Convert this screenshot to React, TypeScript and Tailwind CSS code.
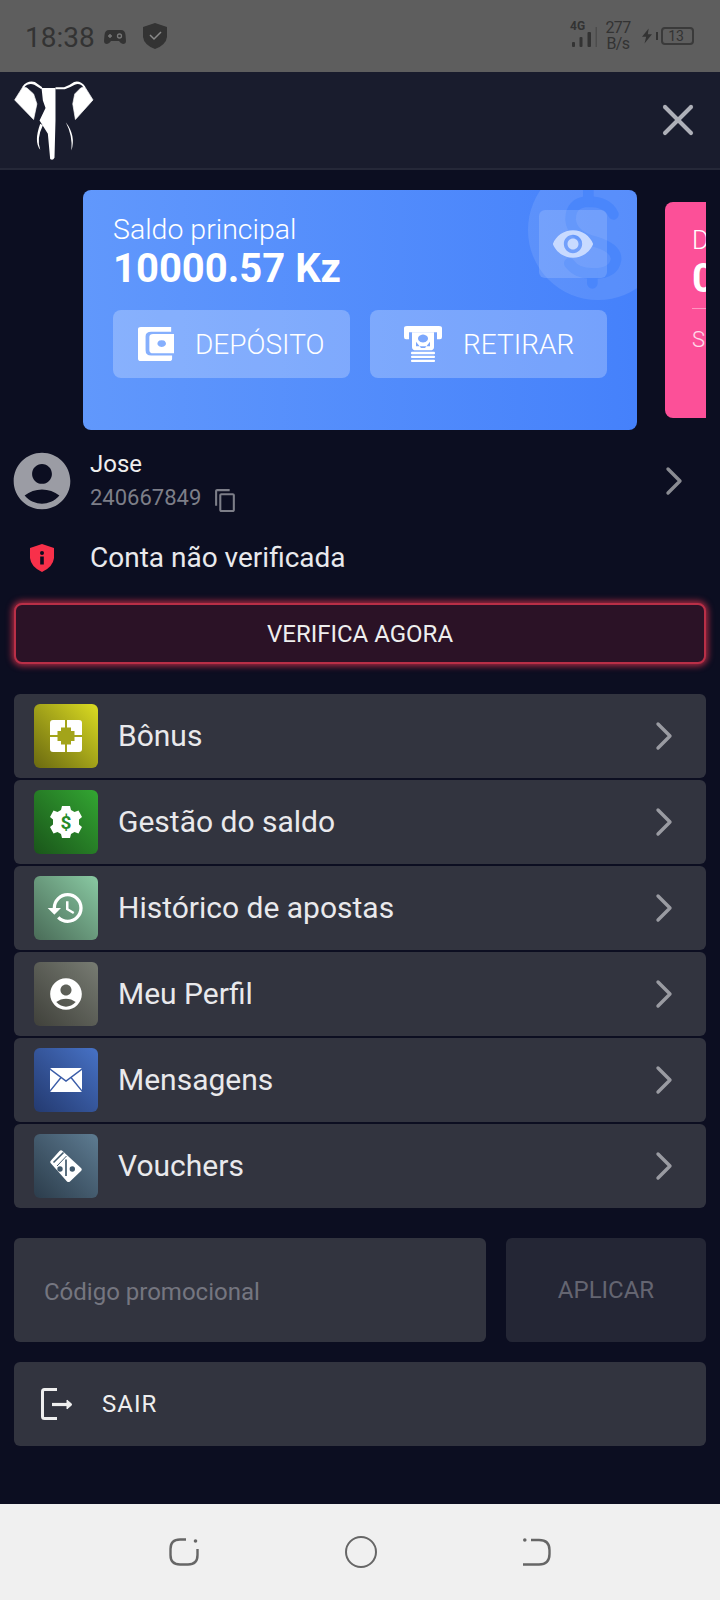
import React from "react";
import { ChevronRight, X } from "lucide-react";
import {
	MdAccountCircle,
	MdHistory,
	MdOutlineContentCopy,
	MdVisibility,
} from "react-icons/md";

const Elephant = () => (
	<svg viewBox="30 25 260 250" className="w-[87px] h-[83px]" fill="#ffffff">
		<path d="M43 88 L68 48 L80 52 L100 70 L110 100 L100 147 Z" stroke="#ffffff" strokeWidth="2" strokeLinejoin="round" />
		<path d="M279 88 L254 48 L242 52 L224 70 L218 100 L226 147 Z" stroke="#ffffff" strokeWidth="2" strokeLinejoin="round" />
		<path d="M66 48 Q82 28 104 34 L126 50 L124 56 L102 42 Q84 36 72 50 Z" />
		<path d="M256 48 Q240 28 222 34 Q205 46 192 50 L166 50 L166 56 L194 56 Q210 50 224 42 Q240 36 250 50 Z" />
		<path d="M124 52 L166 52 L166 150 L163 262 Q158 272 150 266 L143 190 L118 150 L136 112 L128 90 Z" />
		<path d="M120 160 L128 164 Q108 205 120 238 Q100 215 120 160 Z" />
		<path d="M197 155 Q228 195 214 240 Q218 195 197 155 Z" />
	</svg>
);

const Gamepad = () => (
	<svg viewBox="0 0 22 16" className="w-[22px] h-[16px]">
		<path d="M5 1 H17 Q21 1 21.5 6 L22 12 Q22 15 19 15 Q17 15 15 12 H7 Q5 15 3 15 Q0 15 0 12 L0.5 6 Q1 1 5 1 Z" fill="#333333" />
		<path d="M4 7 H8 M6 5 V9" stroke="#777777" strokeWidth="1.4" />
		<circle cx="15.5" cy="7" r="2" fill="none" stroke="#777777" strokeWidth="1.3" />
	</svg>
);

const StatusShield = () => (
	<svg viewBox="0 0 24 26" className="w-[24px] h-[26px]">
		<path d="M12 0 L24 4 V14 Q23 22 12 26 Q1 22 0 14 V4 Z" fill="#333333" />
		<path d="M7 12 L11 16 L18 9" fill="none" stroke="#8a8a8a" strokeWidth="1.5" />
	</svg>
);

const Signal = () => (
	<svg viewBox="0 0 27 20" className="w-[27px] h-[20px]">
		<rect x="2" y="15" width="3" height="5" rx="1" fill="#333333" />
		<rect x="9.5" y="10" width="3" height="10" rx="1" fill="#333333" />
		<rect x="17.5" y="5" width="3.5" height="15" rx="1" fill="#333333" />
		<rect x="25.5" y="0" width="1.5" height="20" fill="#4c4c4c" />
	</svg>
);

const Wallet = () => (
	<svg viewBox="0 0 38 44" preserveAspectRatio="none" className="w-[36px] h-[34px]" fill="#ffffff">
		<path d="M3 0 H35 V6 H14 Q8 6 8 12 V30 Q8 37 14 37 H36 V41 Q36 44 33 44 H3 Q0 44 0 41 V3 Q0 0 3 0 Z" />
		<path fillRule="evenodd" d="M16 9 H38 V34 H16 Q12 34 12 30 V13 Q12 9 16 9 Z M25 17 a4.5 4.5 0 1 0 0.01 0 Z" />
	</svg>
);

const Withdraw = () => (
	<svg viewBox="0 0 38 46" className="w-[38px] h-[36px]" preserveAspectRatio="none" fill="#ffffff">
		<path d="M3 0 H35 Q38 0 38 3 V14 Q38 17 36 17 H33 V8 H5 V17 H2 Q0 17 0 14 V3 Q0 0 3 0 Z" />
		<path fillRule="evenodd" d="M8 8 H30 V27 Q30 31 26 31 H12 Q8 31 8 27 Z M19 11 a5 5 0 1 0 0.01 0 Z M12 20 L17 28 H21 L26 20 L26 26 H12 Z" />
		<rect x="7" y="33" width="24" height="3" rx="1" />
		<rect x="7" y="38" width="24" height="3" rx="1" />
		<rect x="7" y="43" width="24" height="3" rx="1" />
	</svg>
);

const Dollar = () => (
	<svg viewBox="0 0 360 360" className="absolute left-[437px] top-[-5px] w-[120px] h-[120px]" fill="none" stroke="#4a86fb" strokeWidth="32" strokeLinecap="round">
		<path d="M280 88 Q262 50 205 50 Q150 52 152 105 Q155 150 225 170 Q292 190 288 225 Q280 268 215 265 Q170 265 148 235" />
		<path d="M205 15 V50 M217 265 V295" />
	</svg>
);

const BonusIcon = () => (
	<svg viewBox="0 0 32 32" className="w-[32px] h-[32px]">
		<rect width="32" height="32" rx="3" fill="#ffffff" />
		<path fill="#a3a41a" d="M15 0 H17 V8 H15 Z M15 24 H17 V32 H15 Z M0 15 H8 V17 H0 Z M24 15 H32 V17 H24 Z" />
		<path fill="#a3a41a" d="M11 7.5 H21 V11 H24.5 V21 H21 V24.5 H11 V21 H7.5 V11 H11 Z" />
	</svg>
);

const GearIcon = () => (
	<svg viewBox="0 0 32 32" className="w-[32px] h-[32px]">
		<path
			fill="#ffffff"
			d="M12 0 H20 L21 4 L24.5 6 L28.5 4.5 L32 11 L29 13.5 V18.5 L32 21 L28.5 27.5 L24.5 26 L21 28 L20 32 H12 L11 28 L7.5 26 L3.5 27.5 L0 21 L3 18.5 V13.5 L0 11 L3.5 4.5 L7.5 6 L11 4 Z"
		/>
		<text x="16" y="23" textAnchor="middle" fontSize="19" fontWeight="700" fill="#268a28" fontFamily="Roboto, sans-serif">$</text>
	</svg>
);

const MailIcon = () => (
	<svg viewBox="0 0 32 24" className="w-[32px] h-[24px]">
		<rect width="32" height="24" rx="1.5" fill="#ffffff" />
		<path d="M0 1 L16 13 L32 1 M0 23 L11 9.5 M32 23 L21 9.5" fill="none" stroke="#3a5ca8" strokeWidth="1.4" />
	</svg>
);

const VoucherIcon = () => (
	<svg viewBox="0 0 32 32" className="w-[32px] h-[32px]">
		<path fill="#ffffff" d="M9.5 1 Q11 -0.5 12.5 1 L31 18 Q32.5 19.5 31 21 L20 31.5 Q18.5 32.8 17 31.5 L1 13.5 Q-0.5 12 1 10.5 Z" />
		<path d="M3.5 12.5 L13.5 2.5" stroke="#41596c" strokeWidth="1.6" />
		<path d="M7 16 L16.5 6" stroke="#41596c" strokeWidth="1" />
		<circle cx="10" cy="19" r="2.7" fill="#41596c" />
		<circle cx="22.3" cy="19" r="2.7" fill="#41596c" />
		<path d="M16 9.5 V26" stroke="#41596c" strokeWidth="1.7" />
	</svg>
);

const LogoutIcon = () => (
	<svg viewBox="0 0 32 32" className="w-[32px] h-[32px]" fill="none" stroke="#eeeeee" strokeWidth="3">
		<path d="M16 1.5 H3.5 Q1.5 1.5 1.5 3.5 V28.5 Q1.5 30.5 3.5 30.5 H16" />
		<path d="M11 16.5 H30" strokeWidth="3.2" />
		<path d="M26 12 L31 16.5 L26 21 Z" fill="#eeeeee" strokeWidth="1" />
	</svg>
);

const menu = [
	{ label: "Bônus", icon: <BonusIcon />, bg: "from-[#6b6a10] to-[#dcdd22]" },
	{ label: "Gestão do saldo", icon: <GearIcon />, bg: "from-[#1a561a] to-[#33a632]" },
	{ label: "Histórico de apostas", icon: <MdHistory className="text-white text-[40px]" />, bg: "from-[#4a6c58] to-[#8acaa3]" },
	{ label: "Meu Perfil", icon: <MdAccountCircle className="text-white text-[38px]" />, bg: "from-[#40413b] to-[#787c73]" },
	{ label: "Mensagens", icon: <MailIcon />, bg: "from-[#243a70] to-[#4772c6]" },
	{ label: "Vouchers", icon: <VoucherIcon />, bg: "from-[#2c3d4c] to-[#5e7c92]" },
];

const App = () => {
	return (
		<div className="w-[720px] h-[1600px] flex flex-col bg-[#0c0e21] font-[Roboto,sans-serif] overflow-hidden">
			{/* status bar */}
			<div className="h-[72px] shrink-0 bg-[#5e5e5e] flex items-center pl-[25px] pr-[26px] text-[#333333]">
				<span className="text-[28px] leading-none pt-[3px]">18:38</span>
				<span className="ml-[9px] mt-[2px]"><Gamepad /></span>
				<span className="ml-[17px] mt-[-1px]"><StatusShield /></span>
				<div className="ml-auto flex items-center">
					<div className="relative w-[27px] h-[20px] mt-[2px]">
						<Signal />
						<span className="absolute left-0 top-[-7px] text-[12px] font-bold leading-none">4G</span>
					</div>
					<div className="ml-[8px] flex flex-col items-center text-[16px] leading-[16px] tracking-[-0.6px] w-[26px]">
						<span>277</span>
						<span>B/s</span>
					</div>
					<svg viewBox="0 0 12 18" className="ml-[11px] w-[10px] h-[16px]" fill="#333333">
						<path d="M8 0 L0 10 H5 L3 18 L12 7 H7 Z" />
					</svg>
					<span className="ml-[4px] w-[2px] h-[8px] bg-[#333333]" />
					<div className="ml-[3px] w-[33px] h-[18px] rounded-[4px] border-2 border-[#3a3a3a] flex items-center justify-center text-[14px] leading-none pr-[3px]">
						13
					</div>
				</div>
			</div>

			{/* header */}
			<div className="h-[98px] shrink-0 bg-[#191c2d] border-b-2 border-[#252838] flex justify-between pl-[10px] pr-[16px]">
				<div className="pt-[7px]"><Elephant /></div>
				<X className="mt-[22px] w-[52px] h-[52px] text-[#aeb0b8]" strokeWidth={1.9} />
			</div>

			{/* balance cards */}
			<div className="mt-[20px] mr-[14px] pl-[83px] flex items-center gap-[28px] overflow-hidden shrink-0">
				<div className="relative w-[554px] h-[240px] shrink-0 rounded-[8px] overflow-hidden bg-linear-to-r from-[#6198fc] to-[#4581fb] px-[30px] pt-[24px]">
					<div className="absolute left-[445px] top-[-30px] w-[140px] h-[140px] rounded-full bg-white/10" />
					<Dollar />
					<div className="absolute left-[456px] top-[20px] w-[68px] h-[68px] rounded-[6px] bg-white/15 flex items-center justify-center">
						<MdVisibility className="text-[#c8daff] text-[44px]" />
					</div>
					<div className="relative text-white">
						<p className="text-[28.5px] font-light leading-[32px]">Saldo principal</p>
						<p className="text-[40px] font-bold leading-[48px] mt-[-1px]">10000.57 Kz</p>
						<div className="flex gap-[20px] mt-[17px]">
							<button className="w-[237px] h-[68px] rounded-[8px] bg-white/25 flex items-center pl-[25px] gap-[21px] text-[28px] font-light">
								<Wallet />
								<span className="pt-[2px]">DEPÓSITO</span>
							</button>
							<button className="w-[237px] h-[68px] rounded-[8px] bg-white/25 flex items-center pl-[34px] gap-[21px] text-[28px] font-light">
								<Withdraw />
								<span className="pt-[2px]">RETIRAR</span>
							</button>
						</div>
					</div>
				</div>
				<div className="w-[200px] h-[216px] shrink-0 rounded-[8px] bg-[#fc5098] pl-[27px] pt-[22px] text-white">
					<p className="text-[26px] font-light leading-[32px]">D</p>
					<p className="text-[40px] font-bold leading-[46px]">0</p>
					<div className="h-px bg-white/40 mt-[6px]" />
					<p className="text-[22px] font-light mt-[14px] text-white/80">S</p>
				</div>
			</div>

			<div className="px-[14px] flex flex-col grow">
				{/* user */}
				<div className="mt-[18px] h-[66px] flex items-center">
					<MdAccountCircle className="text-[#9b9ca4] text-[68px] ml-[-6px] mr-[14px] shrink-0" />
					<div>
						<p className="text-[24px] leading-[28px] text-[#eeeeee]">Jose</p>
						<div className="flex items-center mt-[5px]">
							<span className="text-[22px] leading-[28px] text-[#7d7e88]">240667849</span>
							<MdOutlineContentCopy className="ml-[12px] mt-[5px] text-[#7d7e88] text-[25px]" />
						</div>
					</div>
					<ChevronRight className="ml-auto mr-[8px] w-[48px] h-[48px] text-[#8a8b92]" strokeWidth={1.7} />
				</div>

				{/* verification */}
				<div className="mt-[22px] flex items-center h-[44px]">
					<svg viewBox="0 0 24 28" className="ml-[16px] w-[24px] h-[28px]">
						<path d="M12 0 L24 4 V14 Q23 23 12 28 Q1 23 0 14 V4 Z" fill="#f8304a" />
						<circle cx="12" cy="9" r="2" fill="#0b0d20" />
						<rect x="10.2" y="12.5" width="3.6" height="8" fill="#0b0d20" />
					</svg>
					<span className="ml-[36px] text-[28px] text-[#e9e9ec]">Conta não verificada</span>
				</div>
				<button className="mt-[23px] h-[61px] rounded-[8px] bg-[#2b1226] border-2 border-[#b92f47] shadow-[0_0_6px_2px_#a82a42] text-[24px] text-[#eeeeee]">
					VERIFICA AGORA
				</button>

				{/* menu */}
				<div className="mt-[30px] flex flex-col gap-[2px]">
					{menu.map((item) => (
						<div key={item.label} className="h-[84px] rounded-[6px] bg-[#32343f] flex items-center pl-[20px] pr-[18px]">
							<div className={`w-[64px] h-[64px] rounded-[6px] bg-linear-to-tr ${item.bg} flex items-center justify-center`}>
								{item.icon}
							</div>
							<span className="ml-[20px] pb-[2px] text-[30px] text-[#e9e9ec]">{item.label}</span>
							<ChevronRight className="ml-auto w-[48px] h-[48px] text-[#9a9ba2]" strokeWidth={1.7} />
						</div>
					))}
				</div>

				{/* promo */}
				<div className="mt-[30px] flex gap-[20px]">
					<div className="w-[472px] h-[104px] rounded-[6px] bg-[#32343f] flex items-center pl-[30px] pt-[4px] text-[24px] text-[#757680]">
						Código promocional
					</div>
					<div className="w-[200px] h-[104px] rounded-[6px] bg-[#242635] flex items-center justify-center text-[24px] text-[#646571]">
						APLICAR
					</div>
				</div>

				<button className="mt-[20px] h-[84px] rounded-[6px] bg-[#32343f] flex items-center pl-[27px] text-[24px] tracking-[1px] text-[#eeeeee]">
					<LogoutIcon />
					<span className="ml-[29px]">SAIR</span>
				</button>
			</div>

			{/* nav bar */}
			<div className="h-[96px] shrink-0 bg-[#f0f0f0] flex items-center justify-between px-[169px]">
				<svg viewBox="0 0 30 28" className="w-[30px] h-[28px]" fill="none" stroke="#666666" strokeWidth="2.4">
					<path d="M17 1.5 H11 Q1.5 1.5 1.5 11 V17 Q1.5 26.5 11 26.5 H19 Q28.5 26.5 28.5 17 V11" />
					<circle cx="26.5" cy="3" r="1.8" fill="#666666" stroke="none" />
				</svg>
				<div className="w-[32px] h-[32px] rounded-full border-[2.4px] border-[#666666]" />
				<svg viewBox="0 0 28 28" className="w-[28px] h-[28px]" fill="none" stroke="#666666" strokeWidth="2.4">
					<path d="M8 2 H16 Q26.5 2 26.5 12 V16 Q26.5 26.5 16 26.5 H0" />
					<circle cx="1.8" cy="2" r="1.8" fill="#666666" stroke="none" />
				</svg>
			</div>
		</div>
	);
};

export default App;
